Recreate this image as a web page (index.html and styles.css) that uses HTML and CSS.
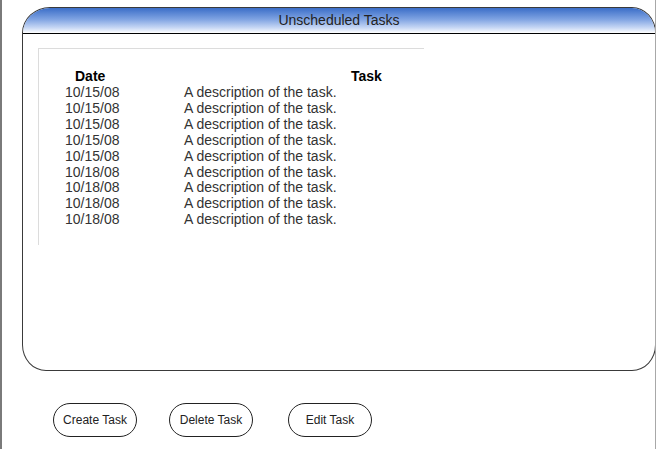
FILE: index.html
```html
<!DOCTYPE html>
<html>
<head>
<meta charset="utf-8">
<link rel="stylesheet" href="styles.css">
</head>
<body>
<div class="frame">
  <div class="panel">
    <div class="panel-header">Unscheduled Tasks</div>
    <div class="panel-body">
      <div class="list">
        <div class="grid">
          <div class="th th-date">Date</div>
          <div class="th th-task">Task</div>
          <div class="td">10/15/08</div><div class="td">A description of the task.</div>
          <div class="td">10/15/08</div><div class="td">A description of the task.</div>
          <div class="td">10/15/08</div><div class="td">A description of the task.</div>
          <div class="td">10/15/08</div><div class="td">A description of the task.</div>
          <div class="td">10/15/08</div><div class="td">A description of the task.</div>
          <div class="td">10/18/08</div><div class="td">A description of the task.</div>
          <div class="td">10/18/08</div><div class="td">A description of the task.</div>
          <div class="td">10/18/08</div><div class="td">A description of the task.</div>
          <div class="td">10/18/08</div><div class="td">A description of the task.</div>
        </div>
      </div>
    </div>
  </div>
  <div class="buttons">
    <div class="btn">Create Task</div>
    <div class="btn">Delete Task</div>
    <div class="btn btn-edit">Edit Task</div>
  </div>
</div>
</body>
</html>
```
FILE: styles.css
```css
html, body {
  margin: 0;
  padding: 0;
  background: #ffffff;
}
body {
  font-family: "Liberation Sans", Arial, sans-serif;
  color: #111;
}
.frame {
  box-sizing: border-box;
  width: 656px;
  height: 449px;
  border-left: 2px solid #7a7a7a;
  border-right: 1px solid #a8a8a8;
  padding-top: 7px;
  overflow: hidden;
}
.panel {
  box-sizing: border-box;
  margin-left: 20px;
  width: 634px;
  height: 364px;
  border: 1px solid #3a3a3a;
  border-radius: 28px 24px 24px 24px / 26px 26px 26px 26px;
  overflow: hidden;
  display: flex;
  flex-direction: column;
}
.panel-header {
  height: 25px;
  border-bottom: 1px solid #000;
  background: linear-gradient(to bottom, #3b6ec8 0%, #7fa3e2 45%, #c9d9f5 80%, #ffffff 100%);
  font-size: 14px;
  line-height: 24px;
  text-align: center;
  color: #222;
}
.panel-body {
  padding: 14px 0 0 15px;
}
.list {
  width: 386px;
  height: 197px;
  border-top: 1px solid #dcdcdc;
  border-left: 1px solid #dcdcdc;
  box-sizing: border-box;
  padding: 19px 0 0 26px;
}
.grid {
  display: grid;
  grid-template-columns: 119px auto;
  font-size: 14px;
  line-height: 15.9px;
}
.th {
  font-weight: bold;
  line-height: 17px;
  color: #000;
}
.th-date {
  padding-left: 10px;
}
.th-task {
  padding-left: 167px;
}
.td {
  color: #333;
  white-space: nowrap;
}
.buttons {
  display: flex;
  gap: 32px;
  margin-top: 32px;
  margin-left: 51px;
}
.btn {
  box-sizing: border-box;
  width: 84px;
  height: 34px;
  border: 1px solid #222;
  border-radius: 17px;
  font-size: 12px;
  line-height: 32px;
  text-align: center;
  color: #222;
}
.btn-edit {
  margin-left: 3px;
}
```
